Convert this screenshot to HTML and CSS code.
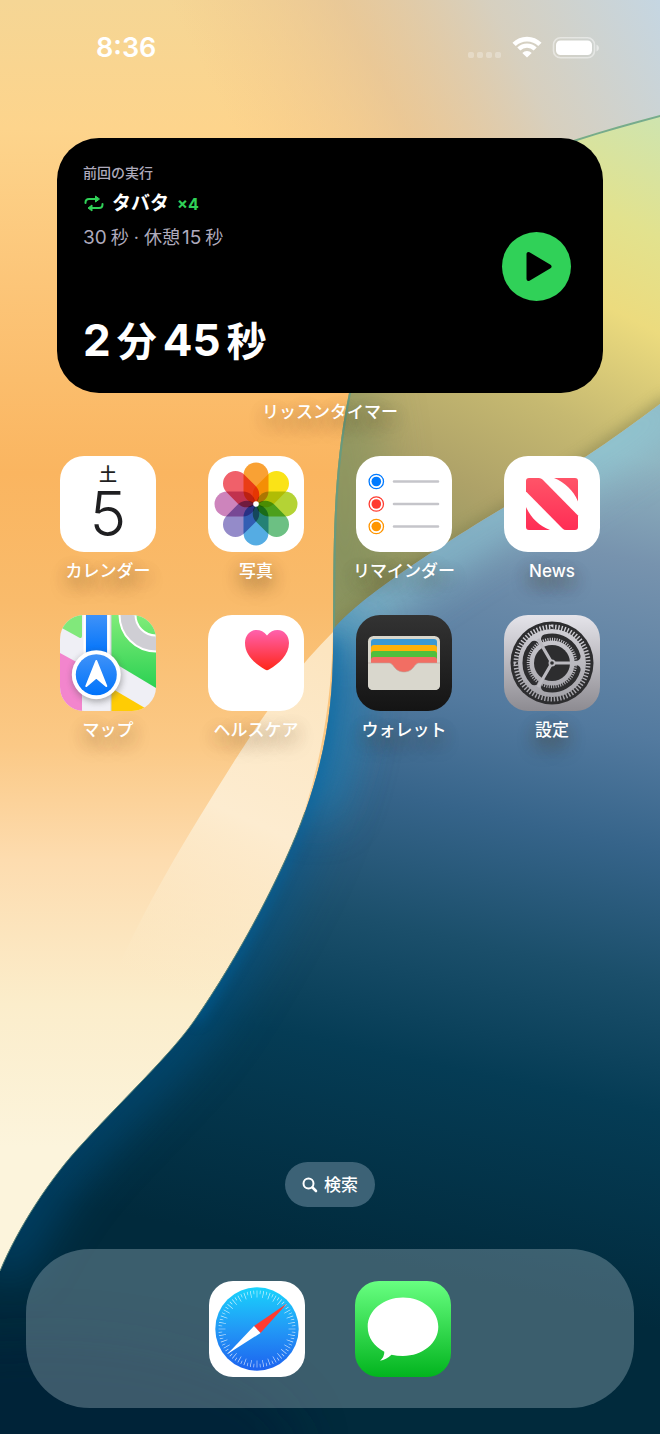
FILE: index.html
```
<!DOCTYPE html>
<html lang="ja">
<head>
  <meta charset="utf-8">
  <meta name="viewport" content="width=device-width, initial-scale=1.0">
  <title>ホーム画面</title>
  <link rel="stylesheet" href="styles.css">
</head>
<body>

  <!-- Wallpaper -->
  <svg class="wallpaper" viewBox="0 0 660 1434" preserveAspectRatio="none" aria-hidden="true">
    <defs>
      <linearGradient id="sand" x1="0" y1="0" x2="0" y2="1">
        <stop offset="0" stop-color="#f5d695"/>
        <stop offset=".09" stop-color="#fdd48c"/>
        <stop offset=".2" stop-color="#fcc578"/>
        <stop offset=".33" stop-color="#fab560"/>
        <stop offset=".42" stop-color="#f9bb6b"/>
        <stop offset=".52" stop-color="#fbc986"/>
        <stop offset=".6" stop-color="#fddcaf"/>
        <stop offset=".7" stop-color="#fbedcb"/>
        <stop offset=".8" stop-color="#fcf4dc"/>
      </linearGradient>
      <linearGradient id="sky" gradientUnits="userSpaceOnUse" x1="660" y1="0" x2="270" y2="200">
        <stop offset="0" stop-color="#c5d6e2"/>
        <stop offset=".35" stop-color="#d3cfc4" stop-opacity=".9"/>
        <stop offset=".65" stop-color="#e2c199" stop-opacity=".65"/>
        <stop offset="1" stop-color="#f2c288" stop-opacity="0"/>
      </linearGradient>
      <linearGradient id="strip" gradientUnits="userSpaceOnUse" x1="300" y1="640" x2="150" y2="980">
        <stop offset="0" stop-color="#fce5c0"/>
        <stop offset=".5" stop-color="#fdecd0"/>
        <stop offset="1" stop-color="#fbefd0" stop-opacity="0"/>
      </linearGradient>
      <linearGradient id="leaf" gradientUnits="userSpaceOnUse" x1="640" y1="110" x2="400" y2="580">
        <stop offset="0" stop-color="#cfe4ae"/>
        <stop offset=".2" stop-color="#e2e28e"/>
        <stop offset=".36" stop-color="#ecdb7e"/>
        <stop offset=".58" stop-color="#c6b971"/>
        <stop offset=".78" stop-color="#aea268"/>
        <stop offset="1" stop-color="#8f9460"/>
      </linearGradient>
      <linearGradient id="sea" gradientUnits="userSpaceOnUse" x1="560" y1="440" x2="380" y2="1270">
        <stop offset="0" stop-color="#8fb2bf"/>
        <stop offset=".12" stop-color="#7793ae"/>
        <stop offset=".32" stop-color="#537a9f"/>
        <stop offset=".45" stop-color="#36648a"/>
        <stop offset=".6" stop-color="#1b4f6b"/>
        <stop offset=".75" stop-color="#053c55"/>
        <stop offset="1" stop-color="#012a3c"/>
      </linearGradient>
      <clipPath id="leaf-clip"><path d="M660 115C560 142 480 165 430 220C385 275 362 335 349 393C331 480 334 560 333 632C350 608 400 570 503 508C560 475 610 442 660 404Z"/></clipPath>
      <clipPath id="sea-clip"><path d="M660 404C610 442 560 475 503 508C400 570 350 608 333 630C334 700 327 750 305 812C285 868 240 955 194 1021C170 1055 130 1092 84 1142C50 1178 18 1228 0 1271V1434H660Z"/></clipPath>
      <filter id="soft" filterUnits="userSpaceOnUse" x="-100" y="-100" width="860" height="1634"><feGaussianBlur stdDeviation="24"/></filter>
      <filter id="edge" filterUnits="userSpaceOnUse" x="-100" y="-100" width="860" height="1634"><feGaussianBlur stdDeviation="7"/></filter>
    </defs>
    <rect width="660" height="1434" fill="url(#sand)"/>
    <rect width="660" height="440" fill="url(#sky)"/>
    <path d="M333 632C290 675 262 718 235 760C190 832 140 910 100 1010L200 1015C285 890 330 780 333 632Z" fill="url(#strip)"/>
    <g clip-path="url(#leaf-clip)">
      <rect x="320" y="100" width="340" height="540" fill="url(#leaf)"/>
      <ellipse cx="345" cy="500" rx="38" ry="150" fill="#85935f" opacity=".7" filter="url(#soft)"/>
      <path d="M333 636C350 612 400 574 503 512C560 479 610 446 670 400" fill="none" stroke="#7c7a48" stroke-width="12" opacity=".6" filter="url(#edge)"/>
      <path d="M660 115C560 142 480 165 430 220C385 275 362 335 349 393C331 480 334 560 333 632" fill="none" stroke="#5f9c86" stroke-width="4" opacity=".8"/>
    </g>
    <g clip-path="url(#sea-clip)">
      <rect y="400" width="660" height="1034" fill="url(#sea)"/>
      <path d="M680 400C610 448 560 481 503 514C400 576 350 614 333 636" fill="none" stroke="#93d4de" stroke-width="36" opacity=".8" filter="url(#soft)"/>
      <path d="M333 610C336 720 325 760 305 812" fill="none" stroke="#2f9ccc" stroke-width="50" opacity=".6" filter="url(#soft)"/>
      <path d="M333 640C334 700 327 750 305 812C285 868 240 955 194 1021C170 1055 130 1092 84 1142C50 1178 18 1228 0 1271" fill="none" stroke="#005b98" stroke-width="40" opacity=".55" filter="url(#soft)"/>
      <path d="M333 640C334 700 327 750 305 812C285 868 240 955 194 1021" fill="none" stroke="#0068a4" stroke-width="8" opacity=".7" filter="url(#edge)"/>
      <ellipse cx="40" cy="1450" rx="260" ry="110" fill="#001f35" opacity=".5" filter="url(#soft)"/>
    </g>
    <path d="M305 812C285 868 240 955 194 1021C170 1055 130 1092 84 1142C50 1178 18 1228 0 1271" fill="none" stroke="#5d8478" stroke-width="1"/>
  </svg>

  <div class="home">

    <header class="status-bar">
      <time class="clock">8:36</time>
      <svg class="status-icons" viewBox="0 0 132 24" role="img" aria-label="Wi-Fi、バッテリー">
        <g fill="#fff" opacity=".28">
          <rect x="0" y="16" width="6" height="6" rx="2"/>
          <rect x="9" y="16" width="6" height="6" rx="2"/>
          <rect x="18" y="16" width="6" height="6" rx="2"/>
          <rect x="27" y="16" width="6" height="6" rx="2"/>
        </g>
        <g fill="none" stroke="#fff">
          <path d="M46.100 8.400A18.300 18.300 0 0 1 71.900 8.400" stroke-width="4.700"/>
          <path d="M50.800 13.100A11.600 11.600 0 0 1 67.200 13.100" stroke-width="4.300"/>
        </g>
        <path d="M59 21.500L54.300 17A6.500 6.500 0 0 1 63.700 17Z" fill="#fff"/>
        <rect x="85.500" y="1.800" width="41" height="20" rx="7" fill="none" stroke="#fff" stroke-width="1.600" opacity=".45"/>
        <rect x="88" y="4.500" width="36" height="14.500" rx="4.500" fill="#fff"/>
        <path d="M128.500 8.500Q131 9.500 131 12T128.500 15.500Z" fill="#fff" opacity=".5"/>
      </svg>
    </header>

    <main>
      <!-- Timer widget -->
      <section class="widget-area" aria-labelledby="widget-name">
        <div class="widget">
          <div class="widget-text">
            <p class="widget-caption">前回の実行</p>
            <p class="widget-title">
              <svg class="repeat-icon" viewBox="0 0 20 18" aria-hidden="true">
                <g fill="none" stroke="#30d158" stroke-width="2" stroke-linecap="round">
                  <path d="M1.500 8V7.500Q1.500 4 5 4H12"/>
                  <path d="M18.500 9V9.500Q18.500 13 15 13H7"/>
                </g>
                <path d="M11.500 1V7L15.500 4Z M8 10V16L4 13Z" fill="#30d158" stroke="#30d158" stroke-linejoin="round"/>
              </svg>
              <span>タバタ</span>
              <span class="times">×4</span>
            </p>
            <p class="widget-detail"><span class="num">30</span>秒 · 休憩<span class="num">15</span>秒</p>
            <p class="widget-total"><span class="num">2</span>分<span class="num">45</span>秒</p>
          </div>
          <button class="play" type="button" aria-label="開始">
            <svg viewBox="0 0 69 69" aria-hidden="true"><path d="M26.500 22V47L47.500 34.500Z" fill="#000" stroke="#000" stroke-width="4" stroke-linejoin="round"/></svg>
          </button>
        </div>
        <h1 class="label" id="widget-name">リッスンタイマー</h1>
      </section>

      <!-- Apps -->
      <nav class="apps" aria-label="アプリ">
        <a class="app" href="#calendar">
          <span class="icon calendar"><span class="weekday">土</span><span class="day">5</span></span>
          <span class="label">カレンダー</span>
        </a>

        <a class="app" href="#photos">
          <svg class="icon photos" viewBox="0 0 96 96" aria-hidden="true">
            <rect width="96" height="96" fill="#fff"/>
            <rect class="petal" x="35.500" y="6.500" width="25" height="41" rx="12.500" fill="#f9a134"/>
            <rect class="petal" x="35.500" y="6.500" width="25" height="41" rx="12.500" fill="#fae317" transform="rotate(45 48 48)"/>
            <rect class="petal" x="35.500" y="6.500" width="25" height="41" rx="12.500" fill="#b4d335" transform="rotate(90 48 48)"/>
            <rect class="petal" x="35.500" y="6.500" width="25" height="41" rx="12.500" fill="#6cc083" transform="rotate(135 48 48)"/>
            <rect class="petal" x="35.500" y="6.500" width="25" height="41" rx="12.500" fill="#55ace3" transform="rotate(180 48 48)"/>
            <rect class="petal" x="35.500" y="6.500" width="25" height="41" rx="12.500" fill="#948bc9" transform="rotate(225 48 48)"/>
            <rect class="petal" x="35.500" y="6.500" width="25" height="41" rx="12.500" fill="#cd84bc" transform="rotate(270 48 48)"/>
            <rect class="petal" x="35.500" y="6.500" width="25" height="41" rx="12.500" fill="#f0606a" transform="rotate(315 48 48)"/>
            <circle cx="48" cy="48" r="2.800" fill="#fff"/>
          </svg>
          <span class="label">写真</span>
        </a>

        <a class="app" href="#reminders">
          <svg class="icon" viewBox="0 0 96 96" aria-hidden="true">
            <rect width="96" height="96" fill="#fff"/>
            <g stroke="#c5c5ca" stroke-width="2.600" stroke-linecap="round"><path d="M38 25.500H82M38 48H82M38 70.500H82"/></g>
            <g fill="#007aff"><circle cx="20.300" cy="25.500" r="4.800"/><circle cx="20.300" cy="25.500" r="7.200" fill="none" stroke="#007aff" stroke-width="1.300"/></g>
            <g fill="#ff3b30"><circle cx="20.300" cy="48" r="4.800"/><circle cx="20.300" cy="48" r="7.200" fill="none" stroke="#ff3b30" stroke-width="1.300"/></g>
            <g fill="#ff9500"><circle cx="20.300" cy="70.500" r="4.800"/><circle cx="20.300" cy="70.500" r="7.200" fill="none" stroke="#ff9500" stroke-width="1.300"/></g>
          </svg>
          <span class="label">リマインダー</span>
        </a>

        <a class="app" href="#news">
          <svg class="icon" viewBox="0 0 96 96" aria-hidden="true">
            <linearGradient id="news-red" gradientUnits="userSpaceOnUse" x1="0" y1="22" x2="0" y2="74">
              <stop offset="0" stop-color="#ff5468"/><stop offset="1" stop-color="#ff2d55"/>
            </linearGradient>
            <rect width="96" height="96" fill="#fff"/>
            <g fill="url(#news-red)">
              <path d="M25 22H35Q37 22 38.500 23.500L74 59.500V71Q74 74 71 74H62Q60 74 58.500 72.500L22 35.500V25Q22 22 25 22Z"/>
              <path d="M50 22H71Q74 22 74 25V45.500C69 34 61 26.500 50 22Z"/>
              <path d="M22 51C27 62 35 69.500 46 74H25Q22 74 22 71Z"/>
            </g>
          </svg>
          <span class="label">News</span>
        </a>

        <a class="app" href="#maps">
          <svg class="icon" viewBox="0 0 96 96" aria-hidden="true">
            <defs>
              <linearGradient id="map-green" x1="0" y1="0" x2="0" y2="1"><stop offset="0" stop-color="#80ec79"/><stop offset="1" stop-color="#2bd152"/></linearGradient>
              <linearGradient id="map-blue" x1="0" y1="0" x2="0" y2="1"><stop offset="0" stop-color="#3f92f8"/><stop offset="1" stop-color="#0073fb"/></linearGradient>
              <filter id="map-shadow" x="-30%" y="-30%" width="160%" height="160%"><feGaussianBlur stdDeviation="3"/></filter>
            </defs>
            <rect width="96" height="96" fill="#efeff5"/>
            <path d="M0 0H22V21Q22 24 19 22.500L0 12Z" fill="#81e87b"/>
            <path d="M51 0H96V73L51 46Z" fill="url(#map-green)"/>
            <circle cx="96" cy="0" r="28.500" fill="none" stroke="#fff" stroke-width="18"/>
            <circle cx="96" cy="0" r="28.500" fill="none" stroke="#cfced4" stroke-width="14"/>
            <path d="M0 38L22 50V96H0Z" fill="#f285cd"/>
            <path d="M51 73L85 93L80 96H51Z" fill="#ffcc04"/>
            <path d="M24.500 0V40M48.500 0V40" stroke="#fff" stroke-width="2"/>
            <path d="M51 0V96" stroke="#cfcfd6" stroke-width="1"/>
            <rect x="26" y="0" width="21" height="40" fill="url(#map-blue)"/>
            <circle cx="37" cy="62" r="25" fill="#555" opacity=".45" filter="url(#map-shadow)"/>
            <circle cx="36.300" cy="59.700" r="24.500" fill="#fff"/>
            <circle cx="36.300" cy="59.700" r="20.500" fill="url(#map-blue)"/>
            <path d="M36.300 46L46.300 71L36.300 62.500L26.300 71Z" fill="#fff" stroke="#fff" stroke-width="2" stroke-linejoin="round"/>
          </svg>
          <span class="label">マップ</span>
        </a>

        <a class="app" href="#health">
          <svg class="icon" viewBox="0 0 96 96" aria-hidden="true">
            <linearGradient id="heart" x1="0" y1="0" x2="0" y2="1"><stop offset="0" stop-color="#ff61ad"/><stop offset="1" stop-color="#ff2719"/></linearGradient>
            <rect width="96" height="96" fill="#fff"/>
            <path d="M59 20.500C62 16.500 65.500 15 69.500 15C76.500 15 81 21 81 28C81 40 71 48.500 61 54.500Q59 55.800 57 54.500C47 48.500 37 40 37 28C37 21 41.500 15 48.500 15C52.500 15 56 16.500 59 20.500Z" fill="url(#heart)"/>
          </svg>
          <span class="label">ヘルスケア</span>
        </a>

        <a class="app" href="#wallet">
          <svg class="icon" viewBox="0 0 96 96" aria-hidden="true">
            <linearGradient id="wallet-bg" x1="0" y1="0" x2="0" y2="1"><stop offset="0" stop-color="#333"/><stop offset="1" stop-color="#141414"/></linearGradient>
            <rect width="96" height="96" fill="url(#wallet-bg)"/>
            <rect x="12" y="21" width="72" height="54" rx="5.500" fill="#d9d7cd"/>
            <rect x="15" y="24" width="66" height="20" rx="3" fill="#3b99d3"/>
            <rect x="15" y="30" width="66" height="20" rx="3" fill="#ffb108"/>
            <rect x="15" y="36" width="66" height="20" rx="3" fill="#50bf3c"/>
            <rect x="15" y="42" width="66" height="20" rx="3" fill="#f26e63"/>
            <path d="M12 48H33C38 48 38 57 48 57C58 57 58 48 63 48H84V69.500Q84 75 78.500 75H17.500Q12 75 12 69.500Z" fill="#d9d7cd"/>
            <path d="M12 48H33C38 48 38 57 48 57C58 57 58 48 63 48H84" fill="none" stroke="#b8a69e" stroke-width=".6"/>
          </svg>
          <span class="label">ウォレット</span>
        </a>

        <a class="app" href="#settings">
          <svg class="icon" viewBox="0 0 96 96" aria-hidden="true">
            <defs>
              <linearGradient id="gear-bg" gradientUnits="userSpaceOnUse" x1="0" y1="0" x2="0" y2="96"><stop offset="0" stop-color="#e5e4ea"/><stop offset="1" stop-color="#8d8b91"/></linearGradient>
              <linearGradient id="gear-metal" gradientUnits="userSpaceOnUse" x1="0" y1="8" x2="0" y2="88"><stop offset="0" stop-color="#d3d2d8"/><stop offset="1" stop-color="#a09fa5"/></linearGradient>
            </defs>
            <rect width="96" height="96" fill="url(#gear-bg)"/>
            <circle cx="48" cy="48" r="41.500" fill="#2d2d2f"/>
            <circle cx="48" cy="48" r="36" fill="none" stroke="url(#gear-metal)" stroke-width="5" stroke-dasharray="1.800 2.200" pathLength="288"/>
            <circle cx="48" cy="48" r="34" fill="url(#gear-metal)"/>
            <!-- slots between the outer and the inner gear -->
            <g fill="none" stroke="#2d2d2f" stroke-width="9" stroke-linecap="round">
              <path d="M41.500 23.900A25 25 0 0 1 72.100 41.500"/>
              <path d="M72.100 54.500A25 25 0 0 1 41.500 72.100"/>
              <path d="M30.300 65.700A25 25 0 0 1 30.300 30.300"/>
            </g>
            <circle cx="48" cy="48" r="23.500" fill="none" stroke="url(#gear-metal)" stroke-width="3.500" stroke-dasharray="1.800 2.200" pathLength="256"/>
            <circle cx="48" cy="48" r="20.300" fill="none" stroke="url(#gear-metal)" stroke-width="4.500"/>
            <circle cx="48" cy="48" r="18" fill="#2d2d2f"/>
            <path d="M48 48H76M48 48L34 24M48 48L34 72" stroke="#bab9bf" stroke-width="3.200"/>
            <circle cx="48" cy="48" r="3.500" fill="#bab9bf"/>
            <circle cx="48" cy="48" r="1.800" fill="#2d2d2f"/>
          </svg>
          <span class="label">設定</span>
        </a>
      </nav>
    </main>

    <footer class="bottom">
      <button class="search" type="button">
        <svg class="search-icon" viewBox="0 0 16 16" aria-hidden="true">
          <circle cx="6.500" cy="6.500" r="5" fill="none" stroke="#fff" stroke-width="2"/>
          <path d="M10.500 10.500L14 14" stroke="#fff" stroke-width="2.600" stroke-linecap="round"/>
        </svg>
        検索
      </button>

      <nav class="dock" aria-label="Dock">
        <a class="app" href="#safari" aria-label="Safari">
          <svg class="icon" viewBox="0 0 96 96" aria-hidden="true">
            <linearGradient id="safari-blue" x1="0" y1="0" x2="0" y2="1"><stop offset="0" stop-color="#19d3fc"/><stop offset=".5" stop-color="#2299f6"/><stop offset="1" stop-color="#1d62ef"/></linearGradient>
            <rect width="96" height="96" fill="#fff"/>
            <circle cx="48" cy="48" r="41.700" fill="url(#safari-blue)"/>
            <g fill="none" stroke="#fff" opacity=".8">
              <circle cx="48" cy="48" r="36.700" stroke-width="3.600" stroke-dasharray="1 9" stroke-dashoffset="5.500" pathLength="360"/>
              <circle cx="48" cy="48" r="35" stroke-width="7" stroke-dasharray="1 9" stroke-dashoffset=".5" pathLength="360"/>
            </g>
            <path d="M78 22.500L51.500 52L45 45Z" fill="#ff3b30"/>
            <path d="M18.500 73L45 45L51.500 52Z" fill="#fff"/>
          </svg>
        </a>
        <a class="app" href="#messages" aria-label="メッセージ">
          <svg class="icon" viewBox="0 0 96 96" aria-hidden="true">
            <linearGradient id="msg-green" x1="0" y1="0" x2="0" y2="1"><stop offset="0" stop-color="#68ff81"/><stop offset="1" stop-color="#02b41e"/></linearGradient>
            <rect width="96" height="96" fill="url(#msg-green)"/>
            <path d="M48 16.500C67.500 16.500 83.300 29.500 83.300 45.800S67.500 75 48 75Q42 75 36.500 73.700C33 77 29 79 25 79.700Q29.500 76 29.300 70.800C19 65.500 12.700 56.500 12.700 45.800C12.700 29.500 28.500 16.500 48 16.500Z" fill="#fff"/>
          </svg>
        </a>
      </nav>
    </footer>

  </div>

</body>
</html>
```
FILE: styles.css
```
* { box-sizing: border-box; }
body { margin: 0; position: relative; font-family: Inter, "Noto Sans CJK JP", sans-serif; color: #fff; background: #012a3c; }
p, h1 { margin: 0; }
a { color: inherit; text-decoration: none; }
button { font: inherit; border: none; padding: 0; cursor: pointer; }
svg { display: block; }

/* sits behind everything */
.wallpaper { position: absolute; top: 0; left: 0; width: 100%; height: 100%; z-index: -1; }

.home { display: flex; flex-direction: column; min-height: 100vh; padding-bottom: 26px; }

.status-bar { display: flex; justify-content: space-between; align-items: center; padding: 30px 60px 0 96px; }
.clock { font-size: 27px; line-height: 36px; font-weight: 600; }
.status-icons { width: 132px; height: 24px; }

/* Widget */
.widget-area { padding: 72px 57px 0; }
.widget { display: flex; justify-content: space-between; align-items: center; padding: 24px 32px 23px 26px; background: #000; border-radius: 42px; }
.widget-caption { font-size: 14px; line-height: 22px; font-weight: 500; color: #aeaabc; }
.widget-title { display: flex; align-items: center; gap: 8px; margin-top: 6px; font-size: 19px; line-height: 28px; font-weight: 700; }
.repeat-icon { width: 20px; height: 18px; margin-left: 1px; }
.times { font-size: 16px; color: #30d158; }
.widget-detail { margin-top: 6px; font-size: 18px; line-height: 28px; color: #aeaabc; font-weight: 400; }
.widget-detail .num { font-size: 19px; margin-right: 4px; }
.widget-detail .num + .num { margin-left: 2px; }
.widget-total { margin-top: 60px; font-size: 40px; line-height: 56px; font-weight: 700; }
.widget-total .num { font-size: 44px; margin-right: 6px; }
.widget-total .num + .num { margin-left: 6px; }
.play { flex: none; width: 69px; height: 69px; border-radius: 50%; background: #30d158; }

.label { font-size: 17px; line-height: 24px; font-weight: 500; text-align: center; white-space: nowrap; text-shadow: 0 6px 16px rgba(70, 50, 20, .45), 0 10px 20px rgba(70, 50, 20, .4); }
.widget-area .label { margin-top: 7px; }

/* App grid */
.apps { display: grid; grid-template-columns: repeat(4, 96px); justify-content: space-between; row-gap: 32px; padding: 32px 60px 0; }
.app { display: flex; flex-direction: column; align-items: center; gap: 7px; }
.icon { flex: none; width: 96px; height: 96px; border-radius: 24px; overflow: hidden; }
.photos { isolation: isolate; }
.petal { mix-blend-mode: multiply; }
.calendar { display: flex; flex-direction: column; align-items: center; padding-top: 8px; background: #fff; color: #1f1f21; }
.weekday { font-size: 18px; line-height: 22px; font-weight: 500; }
.day { font-size: 62px; line-height: 56px; font-weight: 300; }

/* Search and dock */
.bottom { display: flex; flex-direction: column; align-items: center; gap: 42px; margin-top: auto; padding: 0 26px; }
.search { display: flex; align-items: center; gap: 6px; height: 45px; padding: 0 17px; border-radius: 23px; background: #3c6276; color: #fff; font-size: 17px; line-height: 24px; font-weight: 500; }
.search-icon { width: 16px; height: 16px; }
.dock { display: flex; justify-content: center; gap: 50px; width: 100%; padding: 32px 0 31px; border-radius: 64px; background: rgba(156, 180, 190, .38); }
```
